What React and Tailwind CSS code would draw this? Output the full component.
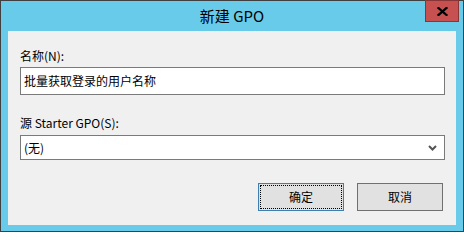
import React from "react";

const font = { fontFamily: '"Noto Sans CJK SC", "Microsoft YaHei", sans-serif' };

export default function App() {
  return (
    <div
      className="w-[464px] h-[232px] border border-[#404040] bg-[#68cbea] flex flex-col text-black"
      style={font}
    >
      <div className="relative h-[30px] flex items-center justify-center shrink-0">
        <span className="text-[15px] leading-none mt-[-2px]">新建 GPO</span>
        <div className="absolute right-[4px] top-[-1px] w-[34px] h-[22px] bg-[#c75050] border border-[#8a3535] flex items-center justify-center">
          <svg width="11" height="9" viewBox="0 0 11 9">
            <path d="M1.5 1 L9.5 8 M9.5 1 L1.5 8" stroke="#000" strokeWidth="2.3" strokeLinecap="square" />
          </svg>
        </div>
      </div>
      <div className="mx-[7px] mb-[6px] flex-1 bg-[#f0f0f0] flex flex-col pl-[12px] pr-[11px]">
        <div className="mt-[17px] h-[16px] text-[12px] leading-[16px]">名称(N):</div>
        <div className="mt-[3px] h-[28px] border border-[#7a7a7a] bg-white flex items-center pl-[3px] text-[12px]">
          批量获取登录的用户名称
        </div>
        <div className="mt-[20px] h-[16px] text-[12px] leading-[16px]">源 Starter GPO(S):</div>
        <div className="mt-[4px] h-[25px] border border-[#7a7a7a] bg-white flex items-center pl-[3px] pr-[7px] text-[12px]">
          <span className="flex-1">(无)</span>
          <svg width="9" height="6" viewBox="0 0 9 6">
            <path d="M1 1 L4.5 4.5 L8 1" stroke="#555" strokeWidth="2" fill="none" />
          </svg>
        </div>
        <div className="mt-[23px] flex justify-end gap-[13px] pr-[2px]">
          <div className="w-[86px] h-[28px] border border-[#3c7fb1] bg-[#e1e1e1] p-[1px]">
            <div className="w-full h-full border border-dotted border-black flex items-center justify-center text-[12px]">
              确定
            </div>
          </div>
          <div className="w-[86px] h-[28px] border border-[#707070] bg-[#e1e1e1] flex items-center justify-center text-[12px]">
            取消
          </div>
        </div>
      </div>
    </div>
  );
}
